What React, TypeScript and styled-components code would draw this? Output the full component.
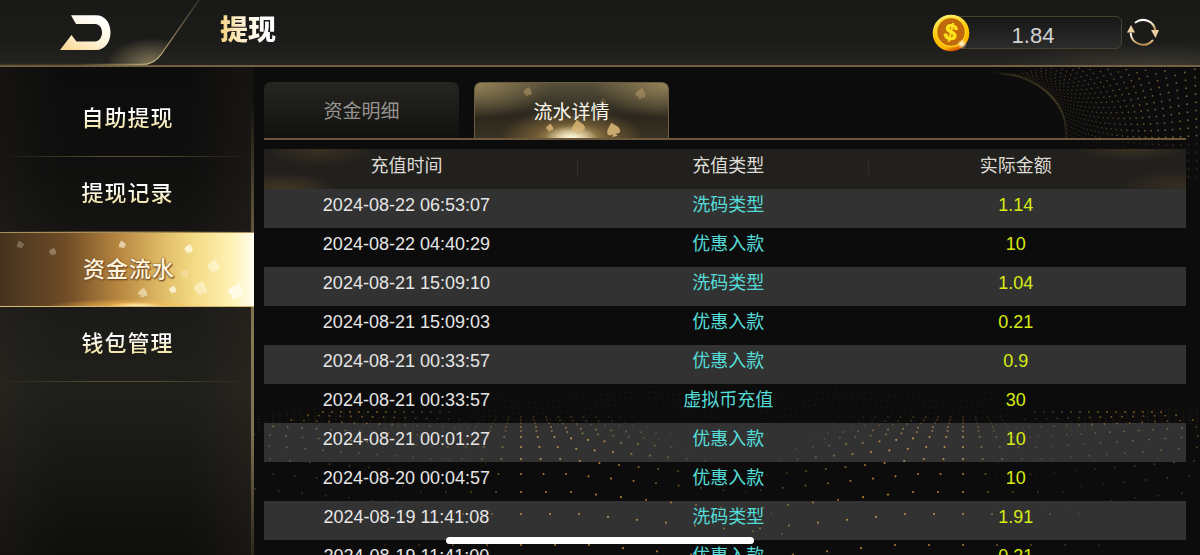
import React from "react";
import styled, { createGlobalStyle, css } from "styled-components";

const GlobalStyle = createGlobalStyle`
  * { box-sizing: border-box; }
  body {
    margin: 0;
    background: #0c0c0c;
    color: #e6e6e6;
    font-family: "Liberation Sans", "Noto Sans CJK SC", sans-serif;
  }
  button { font: inherit; color: inherit; border: 0; padding: 0; background: none; cursor: pointer; }
`;

const Page = styled.div`
  position: relative;
  isolation: isolate;
  display: flex;
  flex-direction: column;
  height: 100vh;
  overflow: hidden;
`;

const Backdrop = styled.svg`
  position: absolute;
  inset: 0;
  width: 100%;
  height: 100%;
  z-index: -1;
`;

const Header = styled.header`
  display: flex;
  align-items: center;
  flex: none;
  height: 67px;
  padding-right: 40px;
  background:
    radial-gradient(ellipse 160px 22px at 96% 100%, rgba(120, 112, 90, 0.28), transparent),
    linear-gradient(#191918, #1b1b1a 60%, #24231f);
  border-bottom: 2px solid #75613f;
`;

const BackButton = styled.button`
  align-self: stretch;
  width: 200px;
  svg { display: block; }
`;

const Title = styled.h1`
  flex: 1;
  margin: 0 0 4px 20px;
  font-size: 28px;
  line-height: 40px;
  font-weight: 900;
  span {
    background: linear-gradient(80deg, #f7d78c 10%, #fff6df 50%, #fff 80%);
    background-clip: text;
    -webkit-background-clip: text;
    color: transparent;
  }
`;

const Wallet = styled.div`
  display: flex;
  align-items: center;
`;

const Coin = styled.svg`
  position: relative;
  z-index: 1;
  flex: none;
  margin-right: -26px;
`;

const Balance = styled.output`
  width: 178px;
  height: 33px;
  padding-top: 3px;
  border: 1px solid #4a4231;
  border-radius: 6px;
  background: linear-gradient(#171717, #2c2c2b);
  color: #d2d2d2;
  font-size: 22px;
  line-height: 32px;
  text-align: center;
`;

const RefreshButton = styled.button`
  margin-left: 4px;
  svg { display: block; }
`;

const Body = styled.div`
  display: flex;
  flex: 1;
  min-height: 0;
`;

const Sidebar = styled.nav`
  flex: none;
  width: 254px;
  padding-top: 15px;
  border-right: 3px solid;
  border-image: linear-gradient(transparent 8%, #5a5038 30%, #857954 55%, #7d7150 75%, #2a261b) 1;
  background:
    linear-gradient(90deg, rgba(80, 70, 48, 0.12), transparent 25%, transparent 75%, rgba(90, 75, 50, 0.14)),
    linear-gradient(#0c0c0c, #0f0f0e 20%, #1b1a18 48%, #1f1f1b 66%, #0e0e0d);
`;

const NavItem = styled.button<{ $active?: boolean }>`
  position: relative;
  display: block;
  width: 100%;
  height: 75px;
  padding: 0 0 0 4px;
  font-size: 22px;
  letter-spacing: 1px;
  line-height: 32px;
  font-weight: 500;
  text-align: center;
  span {
    position: relative;
    background: linear-gradient(#fff 30%, #f3e6ae 80%);
    background-clip: text;
    -webkit-background-clip: text;
    color: transparent;
  }
  ${(p) =>
    p.$active
      ? css`
          width: 254px;
          background:
            radial-gradient(ellipse 28px 4px at 54% 100%, #fff3b8, transparent),
            radial-gradient(ellipse 80px 7px at 50% 100%, rgba(255, 190, 80, 0.8), transparent),
            linear-gradient(90deg, #45331f, #6f4c26 26%, #b5843f 46%, #dcb662 62%, #f5dc86 77%, #fff3b8 92%, #fffef0);
          border-top: 1px solid #a98f5c;
          border-bottom: 1px solid #d9b970;
          span {
            background: none;
            color: #fff4dc;
            text-shadow: 0 1px 2px #7a4f28, 0 0 2px #7a4f28, 1px 1px 1px #7a4f28;
          }
        `
      : css`
          border-bottom: 1px solid;
          border-image: linear-gradient(90deg, transparent, #5a4e32 40%, #5a4e32 60%, transparent) 1;
        `}
`;

const Suits = styled.svg`
  position: absolute;
  inset: 0;
  width: 100%;
  height: 100%;
`;

const Main = styled.main`
  flex: 1;
  min-width: 0;
  padding: 15px 14px 0 10px;
  overflow: hidden;
`;

const Tabs = styled.div`
  display: flex;
  gap: 15px;
  margin-bottom: 9px;
  border-bottom: 2px solid #6d583c;
`;

const Tab = styled.button<{ $active?: boolean }>`
  position: relative;
  width: 195px;
  height: 56px;
  padding-top: 4px;
  font-size: 19px;
  line-height: 28px;
  border-radius: 7px 7px 0 0;
  color: #97948f;
  background: linear-gradient(#262521, #11110f);
  span { position: relative; }
  ${(p) =>
    p.$active &&
    css`
      color: #fbf8ef;
      border: 1px solid #6b5d3e;
      border-bottom: 0;
      background:
        radial-gradient(ellipse 26px 12px at 50% 100%, #fffbe0, transparent),
        radial-gradient(ellipse 72px 30px at 50% 100%, rgba(245, 210, 130, 0.85), rgba(190, 150, 80, 0.4) 50%, transparent),
        radial-gradient(ellipse 75px 36px at 0 0, rgba(170, 148, 98, 0.75), transparent),
        radial-gradient(ellipse 75px 36px at 100% 0, rgba(170, 148, 98, 0.75), transparent),
        linear-gradient(#57503a, #2b271d 60%, #3a3222);
    `}
`;

const Records = styled.table`
  width: 100%;
  table-layout: fixed;
  border-collapse: collapse;
  font-size: 18px;
  line-height: 24px;
  text-align: center;
  th, td { padding: 0 0 7px; }
  th { height: 40px; font-weight: 400; color: #dedcd6; }
  td { height: 39px; }
  th:last-child, td:last-child { padding-right: 62px; }
  thead tr {
    background:
      linear-gradient(#34322b, #34322b) 34% 10px / 1px 16px no-repeat,
      linear-gradient(#2f2d27, #2f2d27) 65.6% 10px / 1px 16px no-repeat,
      radial-gradient(ellipse 55px 18px at 6% 0, rgba(100, 80, 42, 0.35), transparent),
      radial-gradient(ellipse 55px 16px at 2% 100%, rgba(110, 85, 45, 0.45), transparent),
      radial-gradient(ellipse 55px 12px at 94% 0, rgba(100, 80, 42, 0.35), transparent),
      radial-gradient(ellipse 60px 16px at 99% 90%, rgba(110, 85, 45, 0.25), transparent),
      #22201d;
  }
  tbody tr:nth-child(odd) { background: rgba(255, 255, 255, 0.155); }
`;

const TimeCol = styled.col` width: 30.9%; `;
const TypeCol = styled.col` width: 38.9%; `;

const TypeCell = styled.td` color: #55dcd8; `;
const AmountCell = styled.td` color: #d8ec12; `;

const HomeIndicator = styled.div`
  position: absolute;
  left: 50%;
  bottom: 11px;
  width: 308px;
  height: 7px;
  border-radius: 4px;
  background: #fff;
  transform: translateX(-50%);
`;

type Dot = { x: number; y: number; o: number; r: number };

const MIRROR = 742;

function waveDots(): Dot[] {
  const half: Dot[] = [];
  const add = (x: number, y: number, o: number, r = 1.1) => {
    if (x < MIRROR + 60) half.push({ x, y, o, r });
  };
  // Centre fan: each row is [y, spacing]; rows widen as they come closer.
  const rows = [
    [417, 12.5], [420, 13], [423, 14], [427, 15], [431, 15.4], [437, 16.7], [447, 18.4],
    [459, 19.6], [474, 22.5], [492, 25], [514, 29], [545, 34],
  ];
  rows.forEach(([y, step], row) => {
    for (let k = -6; k <= 10; k++) {
      const lift = k > 2 ? (k - 2) * 2.6 * (row / 9) : 0;
      const side = k < 0 ? Math.max(0, 0.7 + k * 0.13) : 0.95 - Math.max(0, k - 4) * 0.13;
      const fade = row < 3 ? 0.3 : row < 5 ? 0.6 : 0.9;
      if (side > 0.02) add(521 + k * step, y + lift, side * fade);
    }
  });
  // Left fan rising from behind the side panel.
  for (let row = 0; row < 9; row++) {
    for (let k = -6; k <= 8; k++) {
      const step = 9 + row * 1.8;
      const y = 412 + row * row * 0.75 + row * 2.5 + (k + 6) * (row * 0.28);
      const x = 377 + (k - row * 0.4) * step;
      if (x > 244) add(x, y, Math.max(0.1, 0.65 - row * 0.04 - Math.max(0, k) * 0.05), 0.9);
    }
  }
  // Small ripples on the far side.
  for (let row = 0; row < 5; row++) {
    for (let k = 0; k < 42; k++) {
      const x = 492 + k * 6 - row * 5;
      add(x, 391 + row * 6 + Math.sin((x - 480) / 34) * 5, 0.18, 0.6);
    }
    for (let k = 0; k < 24; k++) {
      const x = 252 + k * 7;
      add(x, 420 - Math.sin((x - 240) / 52) * 10 + row * 3, 0.22, 0.6);
    }
  }
  return half.concat(
    half.filter((d) => 2 * MIRROR - d.x > MIRROR).map((d) => ({ ...d, x: 2 * MIRROR - d.x }))
  );
}

function swirlDots(): Dot[] {
  const dots: Dot[] = [];
  for (let row = 0; row < 23; row++) {
    const t = row / 22;
    const a = (-88 + t * 98) * (Math.PI / 180);
    const sx = 998 + Math.cos(a) * 68;
    const sy = 132 + Math.sin(a) * 58;
    const ex = 1205;
    const ey = -12 + t * 190;
    const cx = sx + 45;
    const cy = sy + 22 * t + 8;
    for (let k = 0; k <= 30; k++) {
      const u = Math.pow(k / 30, 1.35);
      const x = (1 - u) ** 2 * sx + 2 * u * (1 - u) * cx + u * u * ex;
      const y = (1 - u) ** 2 * sy + 2 * u * (1 - u) * cy + u * u * ey;
      if (y > 68) dots.push({ x, y, o: (0.2 + Math.min(u, 0.7) * 0.65) * (y > 138 ? 0.35 : 1), r: 0.6 + u * 0.4 });
    }
  }
  return dots;
}

const WAVE = waveDots();
const SWIRL = swirlDots();

function BackdropArt() {
  return (
    <Backdrop viewBox="0 0 1200 555" preserveAspectRatio="xMidYMid slice" aria-hidden="true">
      <defs>
        <linearGradient id="arc" x1="0" y1="0" x2="1" y2="1">
          <stop offset="0" stopColor="#54482f" stopOpacity="0" />
          <stop offset="0.6" stopColor="#54482f" stopOpacity="0.7" />
          <stop offset="1" stopColor="#54482f" stopOpacity="0.2" />
        </linearGradient>
      </defs>
      <path d="M985 71C1035 74 1068 98 1066 138" fill="none" stroke="url(#arc)" strokeWidth="2" />
      {SWIRL.map((d, i) => (
        <circle key={i} cx={d.x} cy={d.y} r={d.r} fill="#a9834c" opacity={d.o} />
      ))}
      {WAVE.map((d, i) => (
        <circle key={i} cx={d.x} cy={d.y} r={d.r} fill="#c08a35" opacity={d.o} />
      ))}
    </Backdrop>
  );
}

const SPADE = "M0-6C2-3 6-1 6 2.500C6 5 3 6 1 4L2.500 7H-2.500L-1 4C-3 6-6 5-6 2.500C-6-1-2-3 0-6Z";

function SuitMarks({ marks, fill }: { marks: number[][]; fill: string }) {
  return (
    <Suits aria-hidden="true">
      {marks.map(([x, y, size, turn, opacity], i) => (
        <path
          key={i}
          d={SPADE}
          transform={`translate(${x} ${y}) rotate(${turn}) scale(${size})`}
          fill={fill}
          opacity={opacity}
        />
      ))}
    </Suits>
  );
}

const NAV_MARKS = [
  [20, 11, 0.6, -15, 0.25], [53, 18, 0.6, 15, 0.3], [122, 11, 0.6, -15, 0.6], [189, 15, 0.7, 15, 0.8],
  [214, 32, 1, 10, 0.5], [185, 40, 0.7, 40, 0.25], [201, 54, 1.1, 15, 0.5], [143, 59, 0.75, 10, 0.5],
  [173, 56, 0.6, 15, 0.8], [237, 57, 1.3, 20, 1],
];
const TAB_MARKS = [
  [53, 8, 0.7, 15, 0.4], [166, 10, 0.85, 15, 0.35], [128, 18, 0.5, 0, 0.2], [75, 44, 0.6, 10, 0.8],
  [103, 43, 1.1, -10, 0.8], [138, 46, 1.1, -15, 0.85],
];

const NAV = ["自助提现", "提现记录", "资金流水", "钱包管理"];

const RECORDS = [
  ["2024-08-22 06:53:07", "洗码类型", "1.14"],
  ["2024-08-22 04:40:29", "优惠入款", "10"],
  ["2024-08-21 15:09:10", "洗码类型", "1.04"],
  ["2024-08-21 15:09:03", "优惠入款", "0.21"],
  ["2024-08-21 00:33:57", "优惠入款", "0.9"],
  ["2024-08-21 00:33:57", "虚拟币充值", "30"],
  ["2024-08-21 00:01:27", "优惠入款", "10"],
  ["2024-08-20 00:04:57", "优惠入款", "10"],
  ["2024-08-19 11:41:08", "洗码类型", "1.91"],
  ["2024-08-19 11:41:00", "优惠入款", "0.21"],
];

export default function App() {
  return (
    <Page>
      <GlobalStyle />
      <BackdropArt />
      <Header>
        <BackButton type="button" aria-label="返回">
          <svg width="200" height="67" viewBox="0 0 200 67">
            <defs>
              <linearGradient id="backFill" x1="0" y1="1" x2="0.7" y2="0">
                <stop offset="0" stopColor="#f8d488" />
                <stop offset="0.5" stopColor="#fff3d8" />
                <stop offset="1" stopColor="#fff" />
              </linearGradient>
              <radialGradient id="cornerGlow" gradientUnits="userSpaceOnUse" cx="0" cy="0" r="1" gradientTransform="translate(152 64) scale(46 26)">
                <stop offset="0" stopColor="#a3946c" stopOpacity="0.75" />
                <stop offset="1" stopColor="#a3946c" stopOpacity="0" />
              </radialGradient>
              <radialGradient id="edge" gradientUnits="userSpaceOnUse" cx="154" cy="62" r="75">
                <stop offset="0" stopColor="#cbbb90" />
                <stop offset="0.3" stopColor="#a08f66" />
                <stop offset="1" stopColor="#3c3627" />
              </radialGradient>
            </defs>
            <path d="M0 65H142Q154 65 161 55L199 0H0Z" fill="url(#cornerGlow)" />
            <path d="M0 64.500H142Q154 64.500 161 54.500L199 0" fill="none" stroke="url(#edge)" strokeWidth="1.3" />
            <path d="M71 15.300H96C105 15.300 110.500 23 110.500 32.500S105 50 96 50H60L71.500 35L76.500 41.500H95C99.500 41.500 102 37 102 32.500S99.500 24 95 24H76Z" fill="url(#backFill)" />
          </svg>
        </BackButton>
        <Title><span>提现</span></Title>
        <Wallet>
          <Coin width="38" height="38" viewBox="0 0 38 38" aria-hidden="true">
            <defs>
              <linearGradient id="rim" x1="0.3" y1="0" x2="0.6" y2="1">
                <stop offset="0" stopColor="#fff27a" />
                <stop offset="0.5" stopColor="#ffc400" />
                <stop offset="0.85" stopColor="#ffb300" />
                <stop offset="1" stopColor="#c63d00" />
              </linearGradient>
              <radialGradient id="spark">
                <stop offset="0" stopColor="#fff" />
                <stop offset="1" stopColor="#fff3b0" stopOpacity="0" />
              </radialGradient>
            </defs>
            <circle cx="19" cy="19" r="18.300" fill="url(#rim)" />
            <circle cx="19" cy="18" r="15" fill="#ffd91f" />
            <circle cx="19" cy="18" r="13.800" fill="#c0690c" />
            <text x="19" y="26" fill="#ffe21a" stroke="#ffe21a" strokeWidth="0.6" fontSize="23" fontWeight="700" textAnchor="middle" transform="rotate(14 19 18)">$</text>
            <circle cx="30" cy="30" r="5" fill="url(#spark)" />
          </Coin>
          <Balance>1.84</Balance>
          <RefreshButton type="button" aria-label="刷新">
            <svg width="34" height="32" viewBox="0 0 34 32">
              <defs>
                <linearGradient id="spin" x1="0" y1="0" x2="0" y2="1">
                  <stop offset="0" stopColor="#fff" />
                  <stop offset="0.5" stopColor="#ecd0a0" />
                  <stop offset="1" stopColor="#b98a4a" />
                </linearGradient>
              </defs>
              <g fill="none" stroke="url(#spin)" strokeWidth="2" strokeLinecap="round">
                <path d="M9.500 5.500A12.500 12.500 0 0 1 29.300 13" />
                <path d="M26.500 23.500A12.500 12.500 0 0 1 4.700 16.500" />
              </g>
              <path d="M25 13H33L29.500 21Z M1 15.500L5 8L9 15.500Z" fill="#ecd0a0" />
            </svg>
          </RefreshButton>
        </Wallet>
      </Header>
      <Body>
        <Sidebar>
          {NAV.map((label, i) => (
            <NavItem key={label} type="button" $active={i === 2} aria-current={i === 2 ? "page" : undefined}>
              {i === 2 && <SuitMarks marks={NAV_MARKS} fill="#fffbe6" />}
              <span>{label}</span>
            </NavItem>
          ))}
        </Sidebar>
        <Main>
          <Tabs role="tablist">
            <Tab type="button" role="tab" aria-selected={false}><span>资金明细</span></Tab>
            <Tab type="button" role="tab" aria-selected $active>
              <SuitMarks marks={TAB_MARKS} fill="#dcb978" />
              <span>流水详情</span>
            </Tab>
          </Tabs>
          <Records>
            <colgroup>
              <TimeCol />
              <TypeCol />
              <col />
            </colgroup>
            <thead>
              <tr>
                <th scope="col">充值时间</th>
                <th scope="col">充值类型</th>
                <th scope="col">实际金额</th>
              </tr>
            </thead>
            <tbody>
              {RECORDS.map(([time, type, amount], i) => (
                <tr key={i}>
                  <td>{time}</td>
                  <TypeCell>{type}</TypeCell>
                  <AmountCell>{amount}</AmountCell>
                </tr>
              ))}
            </tbody>
          </Records>
        </Main>
      </Body>
      <HomeIndicator />
    </Page>
  );
}
